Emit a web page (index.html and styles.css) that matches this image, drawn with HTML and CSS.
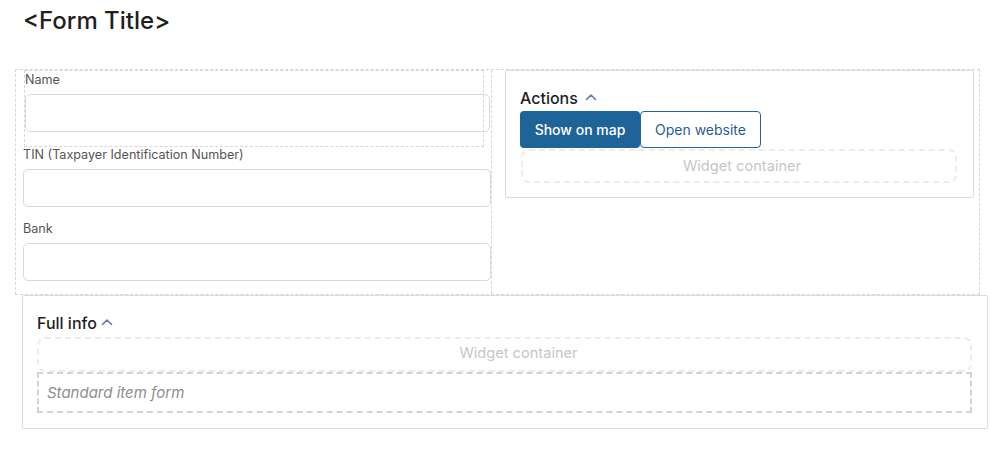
FILE: index.html
```html
<!DOCTYPE html>
<html>
<head>
<meta charset="utf-8">
<link rel="stylesheet" href="styles.css">
</head>
<body>
<div class="page">
  <h1 class="title">&lt;Form Title&gt;</h1>
  <div class="grid">
    <div class="col-left">
      <div class="name-wrap">
        <div class="label label-name">Name</div>
        <div class="input input-name"></div>
      </div>
      <div class="label">TIN (Taxpayer Identification Number)</div>
      <div class="input"></div>
      <div class="label label-bank">Bank</div>
      <div class="input"></div>
    </div>
    <div class="col-right">
      <div class="card actions">
        <div class="card-title">Actions <svg class="chev" width="12" height="8" viewBox="0 0 12 8"><path d="M1.5 6.5 L6 2 L10.5 6.5" fill="none" stroke="#5b7fa6" stroke-width="1.6" stroke-linecap="round" stroke-linejoin="round"/></svg></div>
        <div class="btns">
          <div class="btn btn-primary">Show on map</div>
          <div class="btn btn-outline">Open website</div>
        </div>
        <div class="widget widget-actions">Widget container</div>
      </div>
    </div>
  </div>
  <div class="card full">
    <div class="card-title">Full info <svg class="chev" width="12" height="8" viewBox="0 0 12 8"><path d="M1.5 6.5 L6 2 L10.5 6.5" fill="none" stroke="#5b7fa6" stroke-width="1.6" stroke-linecap="round" stroke-linejoin="round"/></svg></div>
    <div class="widget widget-full">Widget container</div>
    <div class="std">Standard item form</div>
  </div>
</div>
</body>
</html>
```
FILE: styles.css
```css
* { box-sizing: border-box; }
body {
  margin: 0;
  background: #fff;
  font-family: Inter, "Liberation Sans", sans-serif;
  color: #222;
}
.page { padding: 0; }
.title {
  margin: 0;
  padding: 7px 0 0 23px;
  height: 69px;
  font-size: 24px;
  line-height: 28px;
  font-weight: 500;
  color: #1f1f1f;
}
.grid {
  margin-left: 15px;
  width: 965px;
  height: 226px;
  border: 1px dashed #d6d6d6;
  display: grid;
  grid-template-columns: 476px 1fr;
}
.col-left {
  border-right: 1px dashed #d6d6d6;
  padding: 0 0 0 7px;
}
.name-wrap {
  margin-left: 1px;
  width: 460px;
  height: 77px;
  border: 1px dashed #d6d6d6;
  padding-top: 1px;
}
.label {
  font-size: 12.6px;
  line-height: 16px;
  color: #555;
  margin-bottom: 6px;
}
.input {
  width: 468px;
  height: 38px;
  border: 1px solid #d9d9d9;
  border-radius: 5px;
}
.input-name { width: 465px; }
.label-bank { margin-top: 14px; }
.col-right { padding: 0 5px 0 13px; }
.card {
  border: 1px solid #dcdcdc;
  border-radius: 2px;
  background: #fff;
}
.actions {
  height: 128px;
  padding: 17px 14px 14px 14px;
}
.card-title {
  font-size: 16px;
  line-height: 20px;
  font-weight: 500;
  color: #1f1f1f;
  display: flex;
  align-items: center;
  gap: 4px;
}
.chev { margin-top: -3px; }
.actions .chev { margin-left: 3px; }
.btns {
  display: flex;
  margin-top: 3px;
}
.btn {
  height: 37px;
  display: flex;
  align-items: center;
  justify-content: center;
  font-size: 14px;
  border-radius: 4px;
}
.btn-primary {
  width: 120px;
  background: #1f6498;
  color: #fff;
  font-weight: 500;
}
.btn-outline {
  width: 121px;
  border: 1px solid #1f6498;
  color: #1f5f93;
}
.widget {
  height: 34px;
  border: 2px dashed #ececec;
  border-radius: 8px;
  display: flex;
  align-items: center;
  justify-content: center;
  font-size: 14.6px;
  color: #c6c6c6;
}
.widget-actions {
  margin: 1px 2px 0 1px;
  padding-left: 6px;
}
.full {
  margin-left: 22px;
  width: 966px;
  height: 134px;
  padding: 17px 15px 15px 14px;
}
.full .card-title { margin-bottom: 4px; }
.widget-full {
  height: 35px;
  padding-left: 28px;
  padding-bottom: 3px;
}
.std {
  height: 41px;
  border: 2px dashed #d3d3d3;
  display: flex;
  align-items: center;
  padding-left: 8px;
  font-size: 15px;
  font-style: italic;
  color: #8e8e8e;
}
```
